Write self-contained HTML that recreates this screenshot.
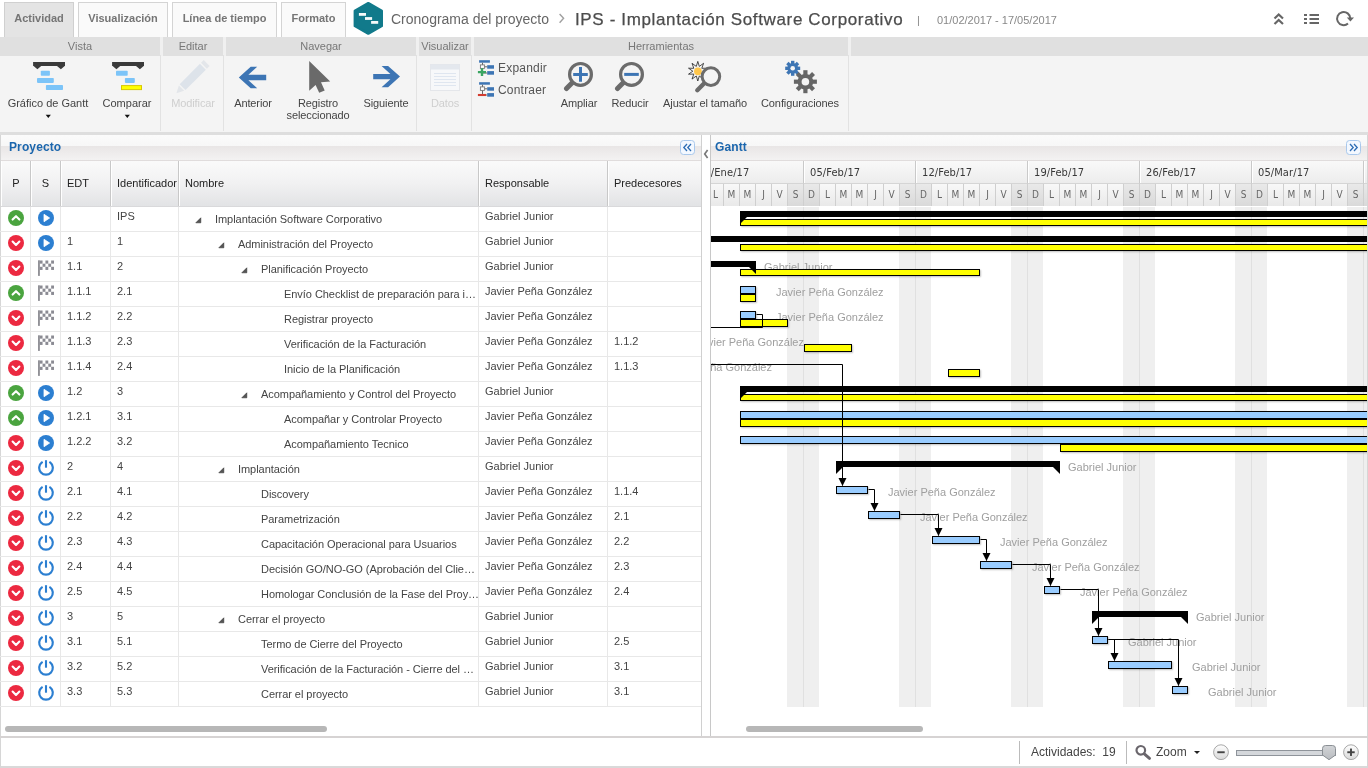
<!DOCTYPE html>
<html lang="es"><head><meta charset="utf-8"><title>Cronograma del proyecto</title>
<style>
*{box-sizing:border-box}
html,body{margin:0;padding:0}
body{width:1368px;height:768px;overflow:hidden;position:relative;background:#fff;font-family:"Liberation Sans",Arial,sans-serif;font-size:12px;color:#333}
.abs{position:absolute}
/* tabs */
.tab{position:absolute;top:2px;height:36px;border:1px solid #d4d4d4;border-bottom:none;background:#fafafa;color:#757575;font-weight:bold;font-size:11px;text-align:center;line-height:30px}
.tab.on{background:#e4e4e4;border-color:#d0d0d0}
/* ribbon */
.gh{position:absolute;top:37px;height:19px;background:#e0e0e0;color:#777;font-size:11px;text-align:center;line-height:18px}
.rb{position:absolute;top:55px;height:77px;left:0;width:1368px;background:#f4f4f4}
.vs{position:absolute;top:55px;height:76px;width:1px;background:#e2e2e2}
.bl{position:absolute;font-size:11px;color:#444;text-align:center;white-space:nowrap;line-height:12px;transform:translateX(-50%)}
.bl.dis{color:#cfcfcf}
.dd{position:absolute;width:0;height:0;border-left:3px solid transparent;border-right:3px solid transparent;border-top:3px solid #222}
/* panels */
.ptitle{position:absolute;letter-spacing:0.12px;top:135px;height:26px;background:linear-gradient(#fbfbfb 0,#f7f7f7 44%,#e9e6e6 46%,#f3f2f2 100%);border-bottom:1px solid #e0dcdc;color:#1b66ad;font-weight:bold;font-size:12px;line-height:24px}
.ch{position:absolute;top:161px;height:46px;background:linear-gradient(#fafafa,#f1f1f2 50%,#e2e3e5);border-bottom:1px solid #d9d9db;}
.chc{position:absolute;top:0;height:45px;border-left:1px solid #c8c8c8;box-shadow:inset 1px 0 0 #fff;line-height:44px;font-size:11px;color:#222;white-space:nowrap}
.row{position:absolute;left:0;width:701px;height:25px;border-bottom:1px solid #e8e8e8}
.row .ic{position:absolute}
.c{position:absolute;top:0;line-height:19px;font-size:11px;color:#444;white-space:nowrap}
.c.n{top:3px;letter-spacing:-0.05px}
.cl{position:absolute;top:207px;width:1px;height:500px;background:#e8e8e8}
/* gantt */
.we{position:absolute;top:0;height:500px;background:#efefef}
.wl{position:absolute;top:0;height:500px;width:1px;background:#e0e0e0}
.yb{position:absolute;background:#ffff00;border:1px solid #000;box-shadow:1px 1px 2px rgba(0,0,0,.25)}
.bb{position:absolute;background:#99ccff;border:1px solid #000;box-shadow:1px 1px 2px rgba(0,0,0,.25)}
.gl{position:absolute;font-size:11px;color:#9f9f9f;white-space:nowrap;line-height:16px}
.gs{position:absolute;left:0;top:0}
.wk{position:absolute;top:0;height:23px;width:112px;border-left:1px solid #c9c9c9;box-shadow:inset 1px 0 0 #fff;border-bottom:1px solid #d5d5d5;font-family:"DejaVu Sans Condensed","DejaVu Sans",sans-serif;font-size:11px;color:#383838;letter-spacing:0.1px;line-height:24px;padding-left:6px;white-space:nowrap;background:linear-gradient(#f9f9f9,#ececec)}
.dy{position:absolute;top:23px;height:22px;width:16px;border-left:1px solid #cfcfcf;font-family:"DejaVu Sans Condensed","DejaVu Sans",sans-serif;font-size:10px;color:#666;line-height:22px;text-align:center;background:linear-gradient(#f8f8f8,#e9e9e9)}
.dy.dw{background:linear-gradient(#e9e9e9,#d9d9d9)}
#root{position:absolute;left:0;top:0;width:1368px;height:768px;will-change:transform;opacity:0.999}
</style></head><body><div id="root">

<!-- top bar -->
<div class="tab on" style="left:4px;width:70px">Actividad</div>
<div class="tab" style="left:78px;width:90px">Visualización</div>
<div class="tab" style="left:172px;width:105px">Línea de tiempo</div>
<div class="tab" style="left:281px;width:65px">Formato</div>

<svg class="abs" style="left:353px;top:1px" width="32" height="36" viewBox="0 0 32 36">
<path d="M15.300 2.200 L28.750 9.800 V25 L15.300 32.600 L1.850 25 V9.800 Z" fill="#117a8b" stroke="#117a8b" stroke-width="2.500" stroke-linejoin="round"/>
<rect x="5.900" y="12" width="7.100" height="2.800" fill="#f4fafa"/><rect x="12" y="16.100" width="7.100" height="2.800" fill="#f4fafa"/><rect x="18.100" y="20" width="7.100" height="2.800" fill="#f4fafa"/>
</svg>
<div class="abs" style="left:391px;top:9px;font-size:14px;color:#666;line-height:20px;white-space:nowrap">Cronograma del proyecto</div>
<svg class="abs" style="left:556px;top:11px" width="12" height="15" viewBox="0 0 12 15"><path d="M3.600 3 L7.600 7.300 L3.600 11.700" fill="none" stroke="#a0a0a0" stroke-width="1.400"/></svg>
<div class="abs" style="left:575px;top:8.5px;font-size:17px;color:#4c4c4c;line-height:22px;white-space:nowrap;letter-spacing:0.64px;-webkit-text-stroke:0.25px #4c4c4c">IPS - Implantación Software Corporativo</div>
<div class="abs" style="left:917px;top:13px;font-size:11px;color:#888;line-height:14px">|</div>
<div class="abs" style="left:937px;top:13px;font-size:11px;color:#888;line-height:14px;white-space:nowrap">01/02/2017 - 17/05/2017</div>

<svg class="abs" style="left:1270px;top:8px" width="90" height="22" viewBox="0 0 90 22">
<g fill="none" stroke="#666" stroke-width="2.2"><path d="M4.5 10.5 L8.7 6.5 L13 10.5"/><path d="M4.5 16 L8.7 12 L13 16"/></g>
<g fill="#666"><rect x="34" y="6" width="3" height="2"/><rect x="39.5" y="6" width="9.5" height="2"/><rect x="34" y="10" width="3" height="2"/><rect x="39.5" y="10" width="9.5" height="2"/><rect x="34" y="14" width="3" height="2"/><rect x="39.5" y="14" width="9.5" height="2"/></g>
<path d="M80.3 10.5 A6.6 6.6 0 1 0 78 15.6" fill="none" stroke="#666" stroke-width="2"/><path d="M76.8 9.5 H84 L80.4 13.6 Z" fill="#666"/>
</svg>

<!-- ribbon -->
<div class="rb"></div>
<div class="abs" style="left:0;top:37px;width:1368px;height:19px;background:#f0f0f0"></div>
<div class="gh" style="left:0;width:160px">Vista</div>
<div class="gh" style="left:163px;width:60px">Editar</div>
<div class="gh" style="left:226px;width:190px">Navegar</div>
<div class="gh" style="left:419px;width:52px">Visualizar</div>
<div class="gh" style="left:474px;width:374px">Herramientas</div>
<div class="gh" style="left:851px;width:517px"></div>
<div class="vs" style="left:160px"></div><div class="vs" style="left:223px"></div><div class="vs" style="left:416px"></div><div class="vs" style="left:471px"></div><div class="vs" style="left:848px"></div>

<!-- Gráfico de Gantt -->
<svg class="abs" style="left:32px;top:60px" width="34" height="34" viewBox="0 0 34 34">
<path d="M1.100 1.900 H33 V6.100 H32.700 L28.900 9.300 L25 6.100 H9.200 L5.400 9.300 L1.600 6.100 H1.100 Z" fill="#3a3a3a"/>
<rect x="8.800" y="10.800" width="9.100" height="5" rx="0.800" fill="#7cc4f8"/><rect x="5" y="18" width="16.800" height="4.900" rx="0.800" fill="#7cc4f8"/><rect x="13.900" y="25.100" width="17.100" height="4.900" rx="0.800" fill="#7cc4f8"/>
</svg>
<div class="bl" style="left:48px;top:97px">Gráfico de Gantt</div>
<svg class="abs" style="left:45px;top:114px" width="8" height="5" viewBox="0 0 8 5"><path d="M0.700 0.800 H5.900 L3.300 3.900 Z" fill="#111"/></svg>
<!-- Comparar -->
<svg class="abs" style="left:111px;top:60px" width="34" height="34" viewBox="0 0 34 34">
<path d="M1.100 1.900 H33 V6.100 H32.700 L28.900 9.300 L25 6.100 H9.200 L5.400 9.300 L1.600 6.100 H1.100 Z" fill="#3a3a3a"/>
<rect x="5" y="10.800" width="11.700" height="5" rx="0.800" fill="#7cc4f8"/><rect x="13.900" y="18" width="9.900" height="4.900" rx="0.800" fill="#7cc4f8"/><rect x="10.500" y="25.600" width="20" height="4" fill="#ffff00" stroke="#d8c800" stroke-width="1"/>
</svg>
<div class="bl" style="left:127px;top:97px">Comparar</div>
<svg class="abs" style="left:124px;top:114px" width="8" height="5" viewBox="0 0 8 5"><path d="M0.700 0.800 H5.900 L3.300 3.900 Z" fill="#111"/></svg>
<!-- Modificar -->
<svg class="abs" style="left:176px;top:60px;overflow:visible" width="34" height="34" viewBox="0 0 34 34">
<g transform="translate(17 17) scale(1.070) translate(-17 -17.300)"><path d="M27 1.500 L32.500 7 L30 9.500 L24.500 4 Z" fill="#e3e6ea"/><path d="M23.500 5 L29 10.500 L10 29.500 L4.500 24 Z" fill="#dde3ea"/><path d="M3.800 25.300 L8.700 30.200 L1.500 32.500 Z" fill="#e3e6ea"/></g>
</svg>
<div class="bl dis" style="left:193px;top:97px;letter-spacing:-0.1px">Modificar</div>
<!-- Anterior -->
<svg class="abs" style="left:238px;top:65px" width="30" height="26" viewBox="0 0 30 26">
<path d="M0.800 12.500 L12.700 1.800 H19.200 L10.400 9.800 H28.200 V15.200 H10.400 L19.200 23.200 H12.700 Z" fill="#3d75b4"/>
</svg>
<div class="bl" style="left:253px;top:97px;letter-spacing:-0.1px">Anterior</div>
<!-- Registro seleccionado -->
<svg class="abs" style="left:305px;top:58px" width="30" height="38" viewBox="0 0 30 38">
<path d="M4.200 2.900 V32.700 L10.600 27.100 L14.200 34.800 L19.700 32.600 L16 24.300 L25.200 23.400 Z" fill="#6a6a6a"/>
</svg>
<div class="bl" style="left:318px;top:97px;letter-spacing:-0.1px">Registro<br>seleccionado</div>
<!-- Siguiente -->
<svg class="abs" style="left:371px;top:63px" width="30" height="26" viewBox="0 0 30 26">
<path d="M29 13.600 L17.100 2.900 H10.600 L19.400 10.900 H2.200 V16.300 H19.400 L10.600 24.300 H17.100 Z" fill="#3d75b4"/>
</svg>
<div class="bl" style="left:386px;top:97px;letter-spacing:-0.1px">Siguiente</div>
<!-- Datos -->
<svg class="abs" style="left:429px;top:62px" width="32" height="30" viewBox="0 0 32 30">
<rect x="1.500" y="2.500" width="29" height="26" fill="#f7f8fa" stroke="#e4e6ea" stroke-width="1"/><rect x="1.500" y="2.500" width="29" height="5" fill="#e4e8ee"/>
<g stroke="#dfe6f0" stroke-width="1"><path d="M5 11.500 H27 M5 14.500 H27 M5 17.500 H27 M5 20.500 H27 M5 23.500 H27"/></g>
</svg>
<div class="bl dis" style="left:445px;top:97px;letter-spacing:-0.1px">Datos</div>
<!-- Expandir / Contraer -->
<svg class="abs" style="left:477px;top:59px" width="18" height="18" viewBox="0 0 18 18">
<rect x="2.100" y="1.200" width="10.800" height="2.500" fill="#3d75b4"/><rect x="10.200" y="6.200" width="6.800" height="3.500" fill="#3d75b4"/><rect x="10.200" y="12.100" width="6.800" height="3.600" fill="#3d75b4"/>
<path d="M5.500 3.700 V14 H10.200 M7.400 7.800 H10.200" fill="none" stroke="#666" stroke-width="1"/><rect x="3.400" y="5.900" width="4" height="3.500" fill="#fff" stroke="#777" stroke-width="0.900"/>
<path d="M0.900 13.100 H9 M5 9.300 V16.900" stroke="#3aa562" stroke-width="2.400"/>
</svg>
<div class="abs" style="left:498px;top:60px;font-size:12px;color:#555;line-height:16px;letter-spacing:0.2px">Expandir</div>
<svg class="abs" style="left:477px;top:81px" width="18" height="18" viewBox="0 0 18 18">
<rect x="2.100" y="1.200" width="10.800" height="2.500" fill="#3d75b4"/><rect x="10.200" y="6.200" width="6.800" height="3.500" fill="#3d75b4"/><rect x="10.200" y="12.100" width="6.800" height="3.600" fill="#3d75b4"/>
<path d="M5.500 3.700 V14 H10.200 M7.400 7.800 H10.200" fill="none" stroke="#666" stroke-width="1"/><rect x="3.400" y="5.900" width="4" height="3.500" fill="#fff" stroke="#777" stroke-width="0.900"/>
<path d="M0.900 14 H9" stroke="#d23c30" stroke-width="2.100"/>
</svg>
<div class="abs" style="left:498px;top:82px;font-size:12px;color:#555;line-height:16px;letter-spacing:0.2px">Contraer</div>
<!-- Ampliar -->
<svg class="abs" style="left:563px;top:60px" width="34" height="34" viewBox="0 0 34 34">
<path d="M9.200 22.800 L3.500 28.500" stroke="#6b6b6b" stroke-width="5" stroke-linecap="round"/><circle cx="17.500" cy="14.400" r="10.900" fill="#f4f4f4" stroke="#6b6b6b" stroke-width="3.200"/>
<path d="M10.200 14.400 H24.800 M17.500 7.100 V21.700" stroke="#3d75b4" stroke-width="3"/>
</svg>
<div class="bl" style="left:579px;top:97px;letter-spacing:-0.1px">Ampliar</div>
<!-- Reducir -->
<svg class="abs" style="left:614px;top:60px" width="34" height="34" viewBox="0 0 34 34">
<path d="M9.200 22.800 L3.500 28.500" stroke="#6b6b6b" stroke-width="5" stroke-linecap="round"/><circle cx="17.500" cy="14.400" r="10.900" fill="#f4f4f4" stroke="#6b6b6b" stroke-width="3.200"/>
<path d="M10.200 14.400 H24.800" stroke="#3d75b4" stroke-width="3"/>
</svg>
<div class="bl" style="left:630px;top:97px;letter-spacing:-0.1px">Reducir</div>
<!-- Ajustar el tamaño -->
<svg class="abs" style="left:688px;top:59px" width="36" height="36" viewBox="0 0 36 36">
<path d="M9.8 2.4 L11.3 7.4 L15.6 4.3 L13.8 9.3 L19.1 9.2 L14.8 12.2 L19.1 15.2 L13.8 15.1 L15.6 20.1 L11.3 17.0 L9.8 22.0 L8.3 17.0 L4.0 20.1 L5.8 15.1 L0.5 15.2 L4.8 12.2 L0.5 9.2 L5.8 9.3 L4.0 4.3 L8.3 7.4 Z" fill="#f4f4f4" stroke="#222" stroke-width="0.800" stroke-linejoin="miter"/>
<circle cx="9.900" cy="12.300" r="3.900" fill="#ffc64a"/>
<path d="M16 24.500 L9.300 31.200" stroke="#6b6b6b" stroke-width="4.400" stroke-linecap="round"/><circle cx="22.900" cy="17.600" r="8.800" fill="#f4f4f4" stroke="#6b6b6b" stroke-width="3"/>
</svg>
<div class="bl" style="left:705px;top:97px;letter-spacing:-0.1px">Ajustar el tamaño</div>
<!-- Configuraciones -->
<svg class="abs" style="left:783px;top:59px" width="36" height="36" viewBox="0 0 36 36">
<g transform="translate(9.700,9.300)"><g fill="#3d75b4"><circle r="5.400"/><rect x="-1.700" y="-7.500" width="3.400" height="15"/><rect x="-1.700" y="-7.500" width="3.400" height="15" transform="rotate(45)"/><rect x="-1.700" y="-7.500" width="3.400" height="15" transform="rotate(90)"/><rect x="-1.700" y="-7.500" width="3.400" height="15" transform="rotate(135)"/></g><circle r="2.300" fill="#f4f4f4"/></g>
<g transform="translate(22.400,22.700)"><g fill="#666"><circle r="7.800"/><rect x="-2.100" y="-11.500" width="4.200" height="23"/><rect x="-2.100" y="-11.500" width="4.200" height="23" transform="rotate(45)"/><rect x="-2.100" y="-11.500" width="4.200" height="23" transform="rotate(90)"/><rect x="-2.100" y="-11.500" width="4.200" height="23" transform="rotate(135)"/></g><circle r="3.800" fill="#f4f4f4"/></g>
</svg>
<div class="bl" style="left:800px;top:97px;letter-spacing:-0.1px">Configuraciones</div>


<div class="abs" style="left:0;top:132px;width:1368px;height:3px;background:#dedede"></div>

<!-- left panel -->
<div class="abs" style="left:0;top:135px;width:1px;height:602px;background:#d6d6d6"></div>
<div class="ptitle" style="left:1px;width:700px;padding-left:8px">Proyecto</div>
<div class="abs" style="left:680px;top:140px;width:15px;height:15px;border:1px solid #a9c8ec;border-radius:3.500px;background:#f3f8ff"></div>
<svg class="abs" style="left:680px;top:140px" width="15" height="15" viewBox="0 0 15 15"><path d="M7 4 L3.800 7.500 L7 11 M11 4 L7.800 7.500 L11 11" fill="none" stroke="#2d6db5" stroke-width="1.300"/></svg>

<div class="ch" style="left:1px;width:700px">
<div class="chc" style="left:0;width:30px;border-left:none;text-align:center">P</div>
<div class="chc" style="left:29px;width:30px;text-align:center">S</div>
<div class="chc" style="left:59px;width:50px;padding-left:6px">EDT</div>
<div class="chc" style="left:109px;width:68px;padding-left:6px">Identificador</div>
<div class="chc" style="left:177px;width:300px;padding-left:6px">Nombre</div>
<div class="chc" style="left:477px;width:129px;padding-left:6px">Responsable</div>
<div class="chc" style="left:606px;width:94px;padding-left:6px">Predecesores</div>
</div>
<div class="cl" style="left:30px"></div><div class="cl" style="left:60px"></div><div class="cl" style="left:110px"></div><div class="cl" style="left:178px"></div><div class="cl" style="left:478px"></div><div class="cl" style="left:607px"></div>
<div class="row" style="top:207px"><svg class="ic" style="left:8px;top:3px" width="16" height="16" viewBox="0 0 16 16"><circle cx="8" cy="8" r="8" fill="#4aa43f"/><path d="M4.6 9.6 L8 6.2 L11.4 9.6" fill="none" stroke="#fff" stroke-width="2.1" stroke-linecap="round" stroke-linejoin="round"/></svg><svg class="ic" style="left:38px;top:3px" width="16" height="16" viewBox="0 0 16 16"><circle cx="8" cy="8" r="8" fill="#2c7fd1"/><path d="M6 4.3 L11.6 8 L6 11.7 Z" fill="#fff" stroke="#fff" stroke-width="0.8" stroke-linejoin="round"/></svg><span class="c" style="left:117px">IPS</span><svg class="ic" style="left:195px;top:10px" width="8" height="8" viewBox="0 0 8 8"><path d="M5.8 0.8 V5.8 H0.8 Z" fill="#555" stroke="#333" stroke-width="0.6"/></svg><span class="c n" style="left:215px;max-width:263px">Implantación Software Corporativo</span><span class="c" style="left:485px">Gabriel Junior</span></div><div class="row" style="top:232px"><svg class="ic" style="left:8px;top:3px" width="16" height="16" viewBox="0 0 16 16"><circle cx="8" cy="8" r="8" fill="#ec2940"/><path d="M4.6 6.6 L8 10 L11.4 6.6" fill="none" stroke="#fff" stroke-width="2.1" stroke-linecap="round" stroke-linejoin="round"/></svg><svg class="ic" style="left:38px;top:3px" width="16" height="16" viewBox="0 0 16 16"><circle cx="8" cy="8" r="8" fill="#2c7fd1"/><path d="M6 4.3 L11.6 8 L6 11.7 Z" fill="#fff" stroke="#fff" stroke-width="0.8" stroke-linejoin="round"/></svg><span class="c" style="left:67px">1</span><span class="c" style="left:117px">1</span><svg class="ic" style="left:218px;top:10px" width="8" height="8" viewBox="0 0 8 8"><path d="M5.8 0.8 V5.8 H0.8 Z" fill="#555" stroke="#333" stroke-width="0.6"/></svg><span class="c n" style="left:238px;max-width:240px">Administración del Proyecto</span><span class="c" style="left:485px">Gabriel Junior</span></div><div class="row" style="top:257px"><svg class="ic" style="left:8px;top:3px" width="16" height="16" viewBox="0 0 16 16"><circle cx="8" cy="8" r="8" fill="#ec2940"/><path d="M4.6 6.6 L8 10 L11.4 6.6" fill="none" stroke="#fff" stroke-width="2.1" stroke-linecap="round" stroke-linejoin="round"/></svg><svg class="ic" style="left:38px;top:3px" width="16" height="16" viewBox="0 0 16 16"><rect x="0.1" y="0.3" width="1.7" height="15.6" fill="#85858c"/><rect x="1.70" y="0.50" width="2.86" height="3.15" fill="#8b8b93"/><rect x="7.42" y="0.50" width="2.86" height="3.15" fill="#8b8b93"/><rect x="13.14" y="0.50" width="2.86" height="3.15" fill="#8b8b93"/><rect x="4.56" y="3.65" width="2.86" height="3.15" fill="#8b8b93"/><rect x="10.28" y="3.65" width="2.86" height="3.15" fill="#8b8b93"/><rect x="1.70" y="6.80" width="2.86" height="3.15" fill="#8b8b93"/><rect x="7.42" y="6.80" width="2.86" height="3.15" fill="#8b8b93"/><rect x="13.14" y="6.80" width="2.86" height="3.15" fill="#8b8b93"/></svg><span class="c" style="left:67px">1.1</span><span class="c" style="left:117px">2</span><svg class="ic" style="left:241px;top:10px" width="8" height="8" viewBox="0 0 8 8"><path d="M5.8 0.8 V5.8 H0.8 Z" fill="#555" stroke="#333" stroke-width="0.6"/></svg><span class="c n" style="left:261px;max-width:217px">Planificación Proyecto</span><span class="c" style="left:485px">Gabriel Junior</span></div><div class="row" style="top:282px"><svg class="ic" style="left:8px;top:3px" width="16" height="16" viewBox="0 0 16 16"><circle cx="8" cy="8" r="8" fill="#4aa43f"/><path d="M4.6 9.6 L8 6.2 L11.4 9.6" fill="none" stroke="#fff" stroke-width="2.1" stroke-linecap="round" stroke-linejoin="round"/></svg><svg class="ic" style="left:38px;top:3px" width="16" height="16" viewBox="0 0 16 16"><rect x="0.1" y="0.3" width="1.7" height="15.6" fill="#85858c"/><rect x="1.70" y="0.50" width="2.86" height="3.15" fill="#8b8b93"/><rect x="7.42" y="0.50" width="2.86" height="3.15" fill="#8b8b93"/><rect x="13.14" y="0.50" width="2.86" height="3.15" fill="#8b8b93"/><rect x="4.56" y="3.65" width="2.86" height="3.15" fill="#8b8b93"/><rect x="10.28" y="3.65" width="2.86" height="3.15" fill="#8b8b93"/><rect x="1.70" y="6.80" width="2.86" height="3.15" fill="#8b8b93"/><rect x="7.42" y="6.80" width="2.86" height="3.15" fill="#8b8b93"/><rect x="13.14" y="6.80" width="2.86" height="3.15" fill="#8b8b93"/></svg><span class="c" style="left:67px">1.1.1</span><span class="c" style="left:117px">2.1</span><span class="c n" style="left:284px;max-width:194px">Envío Checklist de preparación para i…</span><span class="c" style="left:485px">Javier Peña González</span></div><div class="row" style="top:307px"><svg class="ic" style="left:8px;top:3px" width="16" height="16" viewBox="0 0 16 16"><circle cx="8" cy="8" r="8" fill="#ec2940"/><path d="M4.6 6.6 L8 10 L11.4 6.6" fill="none" stroke="#fff" stroke-width="2.1" stroke-linecap="round" stroke-linejoin="round"/></svg><svg class="ic" style="left:38px;top:3px" width="16" height="16" viewBox="0 0 16 16"><rect x="0.1" y="0.3" width="1.7" height="15.6" fill="#85858c"/><rect x="1.70" y="0.50" width="2.86" height="3.15" fill="#8b8b93"/><rect x="7.42" y="0.50" width="2.86" height="3.15" fill="#8b8b93"/><rect x="13.14" y="0.50" width="2.86" height="3.15" fill="#8b8b93"/><rect x="4.56" y="3.65" width="2.86" height="3.15" fill="#8b8b93"/><rect x="10.28" y="3.65" width="2.86" height="3.15" fill="#8b8b93"/><rect x="1.70" y="6.80" width="2.86" height="3.15" fill="#8b8b93"/><rect x="7.42" y="6.80" width="2.86" height="3.15" fill="#8b8b93"/><rect x="13.14" y="6.80" width="2.86" height="3.15" fill="#8b8b93"/></svg><span class="c" style="left:67px">1.1.2</span><span class="c" style="left:117px">2.2</span><span class="c n" style="left:284px;max-width:194px">Registrar proyecto</span><span class="c" style="left:485px">Javier Peña González</span></div><div class="row" style="top:332px"><svg class="ic" style="left:8px;top:3px" width="16" height="16" viewBox="0 0 16 16"><circle cx="8" cy="8" r="8" fill="#ec2940"/><path d="M4.6 6.6 L8 10 L11.4 6.6" fill="none" stroke="#fff" stroke-width="2.1" stroke-linecap="round" stroke-linejoin="round"/></svg><svg class="ic" style="left:38px;top:3px" width="16" height="16" viewBox="0 0 16 16"><rect x="0.1" y="0.3" width="1.7" height="15.6" fill="#85858c"/><rect x="1.70" y="0.50" width="2.86" height="3.15" fill="#8b8b93"/><rect x="7.42" y="0.50" width="2.86" height="3.15" fill="#8b8b93"/><rect x="13.14" y="0.50" width="2.86" height="3.15" fill="#8b8b93"/><rect x="4.56" y="3.65" width="2.86" height="3.15" fill="#8b8b93"/><rect x="10.28" y="3.65" width="2.86" height="3.15" fill="#8b8b93"/><rect x="1.70" y="6.80" width="2.86" height="3.15" fill="#8b8b93"/><rect x="7.42" y="6.80" width="2.86" height="3.15" fill="#8b8b93"/><rect x="13.14" y="6.80" width="2.86" height="3.15" fill="#8b8b93"/></svg><span class="c" style="left:67px">1.1.3</span><span class="c" style="left:117px">2.3</span><span class="c n" style="left:284px;max-width:194px">Verificación de la Facturación</span><span class="c" style="left:485px">Javier Peña González</span><span class="c" style="left:614px">1.1.2</span></div><div class="row" style="top:357px"><svg class="ic" style="left:8px;top:3px" width="16" height="16" viewBox="0 0 16 16"><circle cx="8" cy="8" r="8" fill="#ec2940"/><path d="M4.6 6.6 L8 10 L11.4 6.6" fill="none" stroke="#fff" stroke-width="2.1" stroke-linecap="round" stroke-linejoin="round"/></svg><svg class="ic" style="left:38px;top:3px" width="16" height="16" viewBox="0 0 16 16"><rect x="0.1" y="0.3" width="1.7" height="15.6" fill="#85858c"/><rect x="1.70" y="0.50" width="2.86" height="3.15" fill="#8b8b93"/><rect x="7.42" y="0.50" width="2.86" height="3.15" fill="#8b8b93"/><rect x="13.14" y="0.50" width="2.86" height="3.15" fill="#8b8b93"/><rect x="4.56" y="3.65" width="2.86" height="3.15" fill="#8b8b93"/><rect x="10.28" y="3.65" width="2.86" height="3.15" fill="#8b8b93"/><rect x="1.70" y="6.80" width="2.86" height="3.15" fill="#8b8b93"/><rect x="7.42" y="6.80" width="2.86" height="3.15" fill="#8b8b93"/><rect x="13.14" y="6.80" width="2.86" height="3.15" fill="#8b8b93"/></svg><span class="c" style="left:67px">1.1.4</span><span class="c" style="left:117px">2.4</span><span class="c n" style="left:284px;max-width:194px">Inicio de la Planificación</span><span class="c" style="left:485px">Javier Peña González</span><span class="c" style="left:614px">1.1.3</span></div><div class="row" style="top:382px"><svg class="ic" style="left:8px;top:3px" width="16" height="16" viewBox="0 0 16 16"><circle cx="8" cy="8" r="8" fill="#4aa43f"/><path d="M4.6 9.6 L8 6.2 L11.4 9.6" fill="none" stroke="#fff" stroke-width="2.1" stroke-linecap="round" stroke-linejoin="round"/></svg><svg class="ic" style="left:38px;top:3px" width="16" height="16" viewBox="0 0 16 16"><circle cx="8" cy="8" r="8" fill="#2c7fd1"/><path d="M6 4.3 L11.6 8 L6 11.7 Z" fill="#fff" stroke="#fff" stroke-width="0.8" stroke-linejoin="round"/></svg><span class="c" style="left:67px">1.2</span><span class="c" style="left:117px">3</span><svg class="ic" style="left:241px;top:10px" width="8" height="8" viewBox="0 0 8 8"><path d="M5.8 0.8 V5.8 H0.8 Z" fill="#555" stroke="#333" stroke-width="0.6"/></svg><span class="c n" style="left:261px;max-width:217px">Acompañamiento y Control del Proyecto</span><span class="c" style="left:485px">Gabriel Junior</span></div><div class="row" style="top:407px"><svg class="ic" style="left:8px;top:3px" width="16" height="16" viewBox="0 0 16 16"><circle cx="8" cy="8" r="8" fill="#4aa43f"/><path d="M4.6 9.6 L8 6.2 L11.4 9.6" fill="none" stroke="#fff" stroke-width="2.1" stroke-linecap="round" stroke-linejoin="round"/></svg><svg class="ic" style="left:38px;top:3px" width="16" height="16" viewBox="0 0 16 16"><circle cx="8" cy="8" r="8" fill="#2c7fd1"/><path d="M6 4.3 L11.6 8 L6 11.7 Z" fill="#fff" stroke="#fff" stroke-width="0.8" stroke-linejoin="round"/></svg><span class="c" style="left:67px">1.2.1</span><span class="c" style="left:117px">3.1</span><span class="c n" style="left:284px;max-width:194px">Acompañar y Controlar Proyecto</span><span class="c" style="left:485px">Javier Peña González</span></div><div class="row" style="top:432px"><svg class="ic" style="left:8px;top:3px" width="16" height="16" viewBox="0 0 16 16"><circle cx="8" cy="8" r="8" fill="#ec2940"/><path d="M4.6 6.6 L8 10 L11.4 6.6" fill="none" stroke="#fff" stroke-width="2.1" stroke-linecap="round" stroke-linejoin="round"/></svg><svg class="ic" style="left:38px;top:3px" width="16" height="16" viewBox="0 0 16 16"><circle cx="8" cy="8" r="8" fill="#2c7fd1"/><path d="M6 4.3 L11.6 8 L6 11.7 Z" fill="#fff" stroke="#fff" stroke-width="0.8" stroke-linejoin="round"/></svg><span class="c" style="left:67px">1.2.2</span><span class="c" style="left:117px">3.2</span><span class="c n" style="left:284px;max-width:194px">Acompañamiento Tecnico</span><span class="c" style="left:485px">Javier Peña González</span></div><div class="row" style="top:457px"><svg class="ic" style="left:8px;top:3px" width="16" height="16" viewBox="0 0 16 16"><circle cx="8" cy="8" r="8" fill="#ec2940"/><path d="M4.6 6.6 L8 10 L11.4 6.6" fill="none" stroke="#fff" stroke-width="2.1" stroke-linecap="round" stroke-linejoin="round"/></svg><svg class="ic" style="left:38px;top:3px;overflow:visible" width="16" height="16" viewBox="0 0 16 16"><path d="M3.9 2.4 A6.8 6.8 0 1 0 12.1 2.4" fill="none" stroke="#2c7fd1" stroke-width="2.2" stroke-linecap="round"/><path d="M8 0.2 V7.7" stroke="#2c7fd1" stroke-width="2.1"/></svg><span class="c" style="left:67px">2</span><span class="c" style="left:117px">4</span><svg class="ic" style="left:218px;top:10px" width="8" height="8" viewBox="0 0 8 8"><path d="M5.8 0.8 V5.8 H0.8 Z" fill="#555" stroke="#333" stroke-width="0.6"/></svg><span class="c n" style="left:238px;max-width:240px">Implantación</span><span class="c" style="left:485px">Gabriel Junior</span></div><div class="row" style="top:482px"><svg class="ic" style="left:8px;top:3px" width="16" height="16" viewBox="0 0 16 16"><circle cx="8" cy="8" r="8" fill="#ec2940"/><path d="M4.6 6.6 L8 10 L11.4 6.6" fill="none" stroke="#fff" stroke-width="2.1" stroke-linecap="round" stroke-linejoin="round"/></svg><svg class="ic" style="left:38px;top:3px;overflow:visible" width="16" height="16" viewBox="0 0 16 16"><path d="M3.9 2.4 A6.8 6.8 0 1 0 12.1 2.4" fill="none" stroke="#2c7fd1" stroke-width="2.2" stroke-linecap="round"/><path d="M8 0.2 V7.7" stroke="#2c7fd1" stroke-width="2.1"/></svg><span class="c" style="left:67px">2.1</span><span class="c" style="left:117px">4.1</span><span class="c n" style="left:261px;max-width:217px">Discovery</span><span class="c" style="left:485px">Javier Peña González</span><span class="c" style="left:614px">1.1.4</span></div><div class="row" style="top:507px"><svg class="ic" style="left:8px;top:3px" width="16" height="16" viewBox="0 0 16 16"><circle cx="8" cy="8" r="8" fill="#ec2940"/><path d="M4.6 6.6 L8 10 L11.4 6.6" fill="none" stroke="#fff" stroke-width="2.1" stroke-linecap="round" stroke-linejoin="round"/></svg><svg class="ic" style="left:38px;top:3px;overflow:visible" width="16" height="16" viewBox="0 0 16 16"><path d="M3.9 2.4 A6.8 6.8 0 1 0 12.1 2.4" fill="none" stroke="#2c7fd1" stroke-width="2.2" stroke-linecap="round"/><path d="M8 0.2 V7.7" stroke="#2c7fd1" stroke-width="2.1"/></svg><span class="c" style="left:67px">2.2</span><span class="c" style="left:117px">4.2</span><span class="c n" style="left:261px;max-width:217px">Parametrización</span><span class="c" style="left:485px">Javier Peña González</span><span class="c" style="left:614px">2.1</span></div><div class="row" style="top:532px"><svg class="ic" style="left:8px;top:3px" width="16" height="16" viewBox="0 0 16 16"><circle cx="8" cy="8" r="8" fill="#ec2940"/><path d="M4.6 6.6 L8 10 L11.4 6.6" fill="none" stroke="#fff" stroke-width="2.1" stroke-linecap="round" stroke-linejoin="round"/></svg><svg class="ic" style="left:38px;top:3px;overflow:visible" width="16" height="16" viewBox="0 0 16 16"><path d="M3.9 2.4 A6.8 6.8 0 1 0 12.1 2.4" fill="none" stroke="#2c7fd1" stroke-width="2.2" stroke-linecap="round"/><path d="M8 0.2 V7.7" stroke="#2c7fd1" stroke-width="2.1"/></svg><span class="c" style="left:67px">2.3</span><span class="c" style="left:117px">4.3</span><span class="c n" style="left:261px;max-width:217px">Capacitación Operacional para Usuarios</span><span class="c" style="left:485px">Javier Peña González</span><span class="c" style="left:614px">2.2</span></div><div class="row" style="top:557px"><svg class="ic" style="left:8px;top:3px" width="16" height="16" viewBox="0 0 16 16"><circle cx="8" cy="8" r="8" fill="#ec2940"/><path d="M4.6 6.6 L8 10 L11.4 6.6" fill="none" stroke="#fff" stroke-width="2.1" stroke-linecap="round" stroke-linejoin="round"/></svg><svg class="ic" style="left:38px;top:3px;overflow:visible" width="16" height="16" viewBox="0 0 16 16"><path d="M3.9 2.4 A6.8 6.8 0 1 0 12.1 2.4" fill="none" stroke="#2c7fd1" stroke-width="2.2" stroke-linecap="round"/><path d="M8 0.2 V7.7" stroke="#2c7fd1" stroke-width="2.1"/></svg><span class="c" style="left:67px">2.4</span><span class="c" style="left:117px">4.4</span><span class="c n" style="left:261px;max-width:217px">Decisión GO/NO-GO (Aprobación del Clie…</span><span class="c" style="left:485px">Javier Peña González</span><span class="c" style="left:614px">2.3</span></div><div class="row" style="top:582px"><svg class="ic" style="left:8px;top:3px" width="16" height="16" viewBox="0 0 16 16"><circle cx="8" cy="8" r="8" fill="#ec2940"/><path d="M4.6 6.6 L8 10 L11.4 6.6" fill="none" stroke="#fff" stroke-width="2.1" stroke-linecap="round" stroke-linejoin="round"/></svg><svg class="ic" style="left:38px;top:3px;overflow:visible" width="16" height="16" viewBox="0 0 16 16"><path d="M3.9 2.4 A6.8 6.8 0 1 0 12.1 2.4" fill="none" stroke="#2c7fd1" stroke-width="2.2" stroke-linecap="round"/><path d="M8 0.2 V7.7" stroke="#2c7fd1" stroke-width="2.1"/></svg><span class="c" style="left:67px">2.5</span><span class="c" style="left:117px">4.5</span><span class="c n" style="left:261px;max-width:217px">Homologar Conclusión de la Fase del Proy…</span><span class="c" style="left:485px">Javier Peña González</span><span class="c" style="left:614px">2.4</span></div><div class="row" style="top:607px"><svg class="ic" style="left:8px;top:3px" width="16" height="16" viewBox="0 0 16 16"><circle cx="8" cy="8" r="8" fill="#ec2940"/><path d="M4.6 6.6 L8 10 L11.4 6.6" fill="none" stroke="#fff" stroke-width="2.1" stroke-linecap="round" stroke-linejoin="round"/></svg><svg class="ic" style="left:38px;top:3px;overflow:visible" width="16" height="16" viewBox="0 0 16 16"><path d="M3.9 2.4 A6.8 6.8 0 1 0 12.1 2.4" fill="none" stroke="#2c7fd1" stroke-width="2.2" stroke-linecap="round"/><path d="M8 0.2 V7.7" stroke="#2c7fd1" stroke-width="2.1"/></svg><span class="c" style="left:67px">3</span><span class="c" style="left:117px">5</span><svg class="ic" style="left:218px;top:10px" width="8" height="8" viewBox="0 0 8 8"><path d="M5.8 0.8 V5.8 H0.8 Z" fill="#555" stroke="#333" stroke-width="0.6"/></svg><span class="c n" style="left:238px;max-width:240px">Cerrar el proyecto</span><span class="c" style="left:485px">Gabriel Junior</span></div><div class="row" style="top:632px"><svg class="ic" style="left:8px;top:3px" width="16" height="16" viewBox="0 0 16 16"><circle cx="8" cy="8" r="8" fill="#ec2940"/><path d="M4.6 6.6 L8 10 L11.4 6.6" fill="none" stroke="#fff" stroke-width="2.1" stroke-linecap="round" stroke-linejoin="round"/></svg><svg class="ic" style="left:38px;top:3px;overflow:visible" width="16" height="16" viewBox="0 0 16 16"><path d="M3.9 2.4 A6.8 6.8 0 1 0 12.1 2.4" fill="none" stroke="#2c7fd1" stroke-width="2.2" stroke-linecap="round"/><path d="M8 0.2 V7.7" stroke="#2c7fd1" stroke-width="2.1"/></svg><span class="c" style="left:67px">3.1</span><span class="c" style="left:117px">5.1</span><span class="c n" style="left:261px;max-width:217px">Termo de Cierre del Proyecto</span><span class="c" style="left:485px">Gabriel Junior</span><span class="c" style="left:614px">2.5</span></div><div class="row" style="top:657px"><svg class="ic" style="left:8px;top:3px" width="16" height="16" viewBox="0 0 16 16"><circle cx="8" cy="8" r="8" fill="#ec2940"/><path d="M4.6 6.6 L8 10 L11.4 6.6" fill="none" stroke="#fff" stroke-width="2.1" stroke-linecap="round" stroke-linejoin="round"/></svg><svg class="ic" style="left:38px;top:3px;overflow:visible" width="16" height="16" viewBox="0 0 16 16"><path d="M3.9 2.4 A6.8 6.8 0 1 0 12.1 2.4" fill="none" stroke="#2c7fd1" stroke-width="2.2" stroke-linecap="round"/><path d="M8 0.2 V7.7" stroke="#2c7fd1" stroke-width="2.1"/></svg><span class="c" style="left:67px">3.2</span><span class="c" style="left:117px">5.2</span><span class="c n" style="left:261px;max-width:217px">Verificación de la Facturación - Cierre del …</span><span class="c" style="left:485px">Gabriel Junior</span><span class="c" style="left:614px">3.1</span></div><div class="row" style="top:682px"><svg class="ic" style="left:8px;top:3px" width="16" height="16" viewBox="0 0 16 16"><circle cx="8" cy="8" r="8" fill="#ec2940"/><path d="M4.6 6.6 L8 10 L11.4 6.6" fill="none" stroke="#fff" stroke-width="2.1" stroke-linecap="round" stroke-linejoin="round"/></svg><svg class="ic" style="left:38px;top:3px;overflow:visible" width="16" height="16" viewBox="0 0 16 16"><path d="M3.9 2.4 A6.8 6.8 0 1 0 12.1 2.4" fill="none" stroke="#2c7fd1" stroke-width="2.2" stroke-linecap="round"/><path d="M8 0.2 V7.7" stroke="#2c7fd1" stroke-width="2.1"/></svg><span class="c" style="left:67px">3.3</span><span class="c" style="left:117px">5.3</span><span class="c n" style="left:261px;max-width:217px">Cerrar el proyecto</span><span class="c" style="left:485px">Gabriel Junior</span><span class="c" style="left:614px">3.1</span></div>
<div class="abs" style="left:5px;top:726px;width:322px;height:6px;border-radius:3px;background:#b7b7b7"></div>
<div class="abs" style="left:701px;top:135px;width:1px;height:602px;background:#d0d0d0"></div>

<!-- splitter -->
<svg class="abs" style="left:702px;top:148px" width="8" height="12" viewBox="0 0 8 12"><path d="M5.600 2 L2.700 6 L5.600 10" fill="none" stroke="#7a7a7a" stroke-width="1.700"/></svg>
<div class="abs" style="left:710px;top:135px;width:1px;height:602px;background:#c8c8c8"></div>

<!-- gantt panel -->
<div class="ptitle" style="left:711px;width:656px;padding-left:4px">Gantt</div>
<div class="abs" style="left:1346px;top:140px;width:15px;height:15px;border:1px solid #a9c8ec;border-radius:3.500px;background:#f3f8ff"></div>
<svg class="abs" style="left:1346px;top:140px" width="15" height="15" viewBox="0 0 15 15"><path d="M4 4 L7.200 7.500 L4 11 M8 4 L11.200 7.500 L8 11" fill="none" stroke="#2d6db5" stroke-width="1.300"/></svg>
<div class="abs" style="left:711px;top:161px;width:656px;height:45px;overflow:hidden;background:#eee"><div class="wk" style="left:-20px">29/Ene/17</div><div class="wk" style="left:92px">05/Feb/17</div><div class="wk" style="left:204px">12/Feb/17</div><div class="wk" style="left:316px">19/Feb/17</div><div class="wk" style="left:428px">26/Feb/17</div><div class="wk" style="left:540px">05/Mar/17</div><div class="wk" style="left:652px">12/Mar/17</div><div class="dy dw" style="left:-20px">D</div><div class="dy" style="left:-4px">L</div><div class="dy" style="left:12px">M</div><div class="dy" style="left:28px">M</div><div class="dy" style="left:44px">J</div><div class="dy" style="left:60px">V</div><div class="dy dw" style="left:76px">S</div><div class="dy dw" style="left:92px">D</div><div class="dy" style="left:108px">L</div><div class="dy" style="left:124px">M</div><div class="dy" style="left:140px">M</div><div class="dy" style="left:156px">J</div><div class="dy" style="left:172px">V</div><div class="dy dw" style="left:188px">S</div><div class="dy dw" style="left:204px">D</div><div class="dy" style="left:220px">L</div><div class="dy" style="left:236px">M</div><div class="dy" style="left:252px">M</div><div class="dy" style="left:268px">J</div><div class="dy" style="left:284px">V</div><div class="dy dw" style="left:300px">S</div><div class="dy dw" style="left:316px">D</div><div class="dy" style="left:332px">L</div><div class="dy" style="left:348px">M</div><div class="dy" style="left:364px">M</div><div class="dy" style="left:380px">J</div><div class="dy" style="left:396px">V</div><div class="dy dw" style="left:412px">S</div><div class="dy dw" style="left:428px">D</div><div class="dy" style="left:444px">L</div><div class="dy" style="left:460px">M</div><div class="dy" style="left:476px">M</div><div class="dy" style="left:492px">J</div><div class="dy" style="left:508px">V</div><div class="dy dw" style="left:524px">S</div><div class="dy dw" style="left:540px">D</div><div class="dy" style="left:556px">L</div><div class="dy" style="left:572px">M</div><div class="dy" style="left:588px">M</div><div class="dy" style="left:604px">J</div><div class="dy" style="left:620px">V</div><div class="dy dw" style="left:636px">S</div><div class="dy dw" style="left:652px">D</div><div class="dy" style="left:668px">L</div><div class="dy" style="left:684px">M</div><div class="dy" style="left:700px">M</div><div class="dy" style="left:716px">J</div><div class="dy" style="left:732px">V</div><div class="dy dw" style="left:748px">S</div></div>
<div class="abs" style="left:711px;top:207px;width:656px;height:500px;overflow:hidden"><div class="we" style="left:76px;width:32px"></div><div class="wl" style="left:92px"></div><div class="we" style="left:188px;width:32px"></div><div class="wl" style="left:204px"></div><div class="we" style="left:300px;width:32px"></div><div class="wl" style="left:316px"></div><div class="we" style="left:412px;width:32px"></div><div class="wl" style="left:428px"></div><div class="we" style="left:524px;width:32px"></div><div class="wl" style="left:540px"></div><div class="we" style="left:636px;width:32px"></div><div class="wl" style="left:652px"></div><span class="gl" style="left:53px;top:52px">Gabriel Junior</span><span class="gl" style="left:65px;top:77px">Javier Peña González</span><span class="gl" style="left:65px;top:102px">Javier Peña González</span><span class="gl" style="left:357px;top:252px">Gabriel Junior</span><span class="gl" style="left:177px;top:277px">Javier Peña González</span><span class="gl" style="left:209px;top:302px">Javier Peña González</span><span class="gl" style="left:289px;top:327px">Javier Peña González</span><span class="gl" style="left:321px;top:352px">Javier Peña González</span><span class="gl" style="left:369px;top:377px">Javier Peña González</span><span class="gl" style="left:485px;top:402px">Gabriel Junior</span><span class="gl" style="left:417px;top:427px">Gabriel Junior</span><span class="gl" style="left:481px;top:452px">Gabriel Junior</span><span class="gl" style="left:497px;top:477px">Gabriel Junior</span><span class="gl" style="right:563px;top:127px">Javier Peña González</span><span class="gl" style="right:595px;top:152px">Javier Peña González</span><div class="yb" style="left:29px;top:12px;width:660px;height:7px"></div><div class="yb" style="left:29px;top:37px;width:660px;height:7px"></div><div class="yb" style="left:29px;top:62px;width:240px;height:7px"></div><div class="bb" style="left:29px;top:79px;width:16px;height:8px"></div><div class="yb" style="left:29px;top:87px;width:16px;height:8px"></div><div class="bb" style="left:29px;top:104px;width:16px;height:8px"></div><div class="yb" style="left:29px;top:112px;width:48px;height:8px"></div><div class="yb" style="left:93px;top:137px;width:48px;height:8px"></div><div class="yb" style="left:237px;top:162px;width:32px;height:8px"></div><div class="yb" style="left:29px;top:187px;width:660px;height:7px"></div><div class="bb" style="left:29px;top:204px;width:660px;height:8px"></div><div class="yb" style="left:29px;top:212px;width:660px;height:8px"></div><div class="bb" style="left:29px;top:229px;width:660px;height:8px"></div><div class="yb" style="left:349px;top:237px;width:340px;height:8px"></div><div class="bb" style="left:125px;top:279px;width:32px;height:8px"></div><div class="bb" style="left:157px;top:304px;width:32px;height:8px"></div><div class="bb" style="left:221px;top:329px;width:48px;height:8px"></div><div class="bb" style="left:269px;top:354px;width:32px;height:8px"></div><div class="bb" style="left:333px;top:379px;width:16px;height:8px"></div><div class="bb" style="left:381px;top:429px;width:16px;height:8px"></div><div class="bb" style="left:397px;top:454px;width:64px;height:8px"></div><div class="bb" style="left:461px;top:479px;width:16px;height:8px"></div><svg class="gs" width="656" height="520" viewBox="0 0 656 520"><rect x="29" y="4" width="660" height="6" fill="#000"/><path d="M29 10 h7 l-7 7 Z" fill="#000"/><rect x="-3" y="29" width="692" height="6" fill="#000"/><rect x="-3" y="54" width="48" height="6" fill="#000"/><path d="M45 60 h-7 l7 7 Z" fill="#000"/><rect x="29" y="179" width="660" height="6" fill="#000"/><path d="M29 185 h7 l-7 7 Z" fill="#000"/><rect x="125" y="254" width="224" height="6" fill="#000"/><path d="M125 260 h7 l-7 7 Z" fill="#000"/><path d="M349 260 h-7 l7 7 Z" fill="#000"/><rect x="381" y="404" width="96" height="6" fill="#000"/><path d="M381 410 h7 l-7 7 Z" fill="#000"/><path d="M477 410 h-7 l7 7 Z" fill="#000"/><path d="M45.5 107.5 L51.5 107.5 L51.5 120.5 L-10.5 120.5" fill="none" stroke="#000" stroke-width="1"/><path d="M-10.5 157.5 L131.5 157.5 L131.5 278.5" fill="none" stroke="#000" stroke-width="1"/><path d="M131.5 279 l-4 -8 h8 Z" fill="#000"/><path d="M157.5 282.5 L163.5 282.5 L163.5 303.5" fill="none" stroke="#000" stroke-width="1"/><path d="M163.5 304 l-4 -8 h8 Z" fill="#000"/><path d="M189.5 307.5 L227.5 307.5 L227.5 328.5" fill="none" stroke="#000" stroke-width="1"/><path d="M227.5 329 l-4 -8 h8 Z" fill="#000"/><path d="M269.5 332.5 L275.5 332.5 L275.5 353.5" fill="none" stroke="#000" stroke-width="1"/><path d="M275.5 354 l-4 -8 h8 Z" fill="#000"/><path d="M301.5 357.5 L339.5 357.5 L339.5 378.5" fill="none" stroke="#000" stroke-width="1"/><path d="M339.5 379 l-4 -8 h8 Z" fill="#000"/><path d="M349.5 382.5 L387.5 382.5 L387.5 428.5" fill="none" stroke="#000" stroke-width="1"/><path d="M387.5 429 l-4 -8 h8 Z" fill="#000"/><path d="M397.5 432.5 L403.5 432.5 L403.5 453.5" fill="none" stroke="#000" stroke-width="1"/><path d="M403.5 454 l-4 -8 h8 Z" fill="#000"/><path d="M397.5 432.5 L467.5 432.5 L467.5 478.5" fill="none" stroke="#000" stroke-width="1"/><path d="M467.5 479 l-4 -8 h8 Z" fill="#000"/></svg></div>
<div class="abs" style="left:746px;top:726px;width:177px;height:6px;border-radius:3px;background:#b7b7b7"></div>
<div class="abs" style="left:1367px;top:135px;width:1px;height:602px;background:#d6d6d6"></div>

<!-- status bar -->
<div class="abs" style="left:0;top:736px;width:1368px;height:2px;background:#d6d3d3"></div>
<div class="abs" style="left:0;top:738px;width:1368px;height:30px;background:#fff;border:1px solid #d6d6d6;border-top:none;border-bottom:2px solid #d9d9d9"></div>
<div class="abs" style="left:1019px;top:741px;width:1px;height:23px;background:#bbb"></div>
<div class="abs" style="left:1031px;top:744px;font-size:12px;color:#444;line-height:16px;white-space:nowrap">Actividades:&nbsp; 19</div>
<div class="abs" style="left:1126px;top:741px;width:1px;height:23px;background:#bbb"></div>
<svg class="abs" style="left:1134px;top:743px" width="20" height="20" viewBox="0 0 20 20"><circle cx="6.800" cy="7.300" r="4.300" fill="none" stroke="#6a666c" stroke-width="2.200"/><path d="M10.300 10.800 L15.500 15.300" stroke="#6a666c" stroke-width="3" stroke-linecap="round"/></svg>
<div class="abs" style="left:1156px;top:744px;font-size:12px;color:#444;line-height:16px">Zoom</div>
<div class="dd" style="left:1194px;top:751px"></div>
<svg class="abs" style="left:1212px;top:744px" width="150" height="18" viewBox="0 0 150 18">
<defs><linearGradient id="bg1" x1="0" y1="0" x2="0" y2="1"><stop offset="0" stop-color="#ffffff"/><stop offset="1" stop-color="#d9d9d9"/></linearGradient>
<linearGradient id="kg1" x1="0" y1="0" x2="0" y2="1"><stop offset="0" stop-color="#d2d4d7"/><stop offset="1" stop-color="#b9bcc0"/></linearGradient></defs>
<circle cx="9" cy="8.200" r="7.400" fill="url(#bg1)" stroke="#a8a8a8" stroke-width="1"/><rect x="5.300" y="7.300" width="7.400" height="1.900" fill="#444"/>
<rect x="24.500" y="6.500" width="99" height="5" fill="#d4d7db" stroke="#8e939a" stroke-width="1"/>
<path d="M110.500 4.500 a3 3 0 0 1 3 -3 h7 a3 3 0 0 1 3 3 v6.500 l-6.500 4.700 l-6.500 -4.700 Z" fill="url(#kg1)" stroke="#8a8f94" stroke-width="1" stroke-linejoin="round"/>
<circle cx="139" cy="8.200" r="7.400" fill="url(#bg1)" stroke="#a8a8a8" stroke-width="1"/><rect x="135.300" y="7.300" width="7.400" height="1.900" fill="#444"/><rect x="138.050" y="4.550" width="1.900" height="7.400" fill="#444"/>
</svg>
</div></body></html>
